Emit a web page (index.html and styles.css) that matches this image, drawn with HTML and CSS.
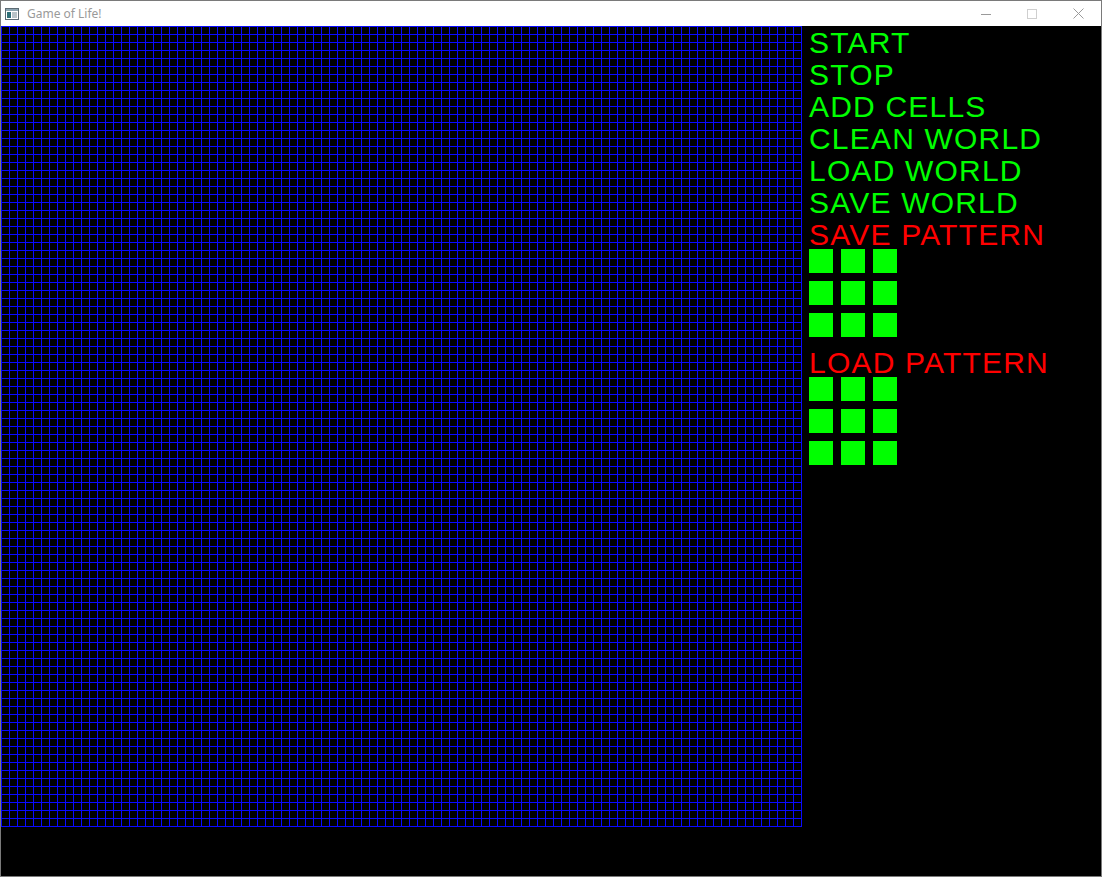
FILE: index.html
```html
<!DOCTYPE html>
<html>
<head>
<meta charset="utf-8">
<title>Game of Life!</title>
<link rel="stylesheet" href="styles.css">
</head>
<body>
<div class="window">
  <div class="titlebar">
    <div class="title-left">
      <svg class="app-icon" width="14" height="12" viewBox="0 0 14 12">
        <rect x="0.5" y="0.5" width="13" height="11" fill="#ffffff" stroke="#5d6b73"/>
        <rect x="1" y="1" width="12" height="2" fill="#8aa3b0"/>
        <rect x="2" y="4" width="4" height="6" fill="#2e6f77"/>
        <rect x="7" y="4" width="5" height="6" fill="#b9c3c8"/>
      </svg>
      <span class="title-text">Game of Life!</span>
    </div>
    <div class="controls">
      <div class="ctl">
        <svg width="10" height="10" viewBox="0 0 10 10"><line x1="0" y1="5.5" x2="10" y2="5.5" stroke="#9a9a9a" stroke-width="1"/></svg>
      </div>
      <div class="ctl">
        <svg width="10" height="10" viewBox="0 0 10 10"><rect x="0.5" y="0.5" width="9" height="9" fill="none" stroke="#cfcfcf" stroke-width="1"/></svg>
      </div>
      <div class="ctl">
        <svg width="11" height="11" viewBox="0 0 11 11"><path d="M0.5 0.5 L10.5 10.5 M10.5 0.5 L0.5 10.5" stroke="#9a9a9a" stroke-width="1"/></svg>
      </div>
    </div>
  </div>
  <div class="content">
    <div class="world"></div>
    <div class="panel">
      <div class="item green">START</div>
      <div class="item green">STOP</div>
      <div class="item green">ADD CELLS</div>
      <div class="item green">CLEAN WORLD</div>
      <div class="item green">LOAD WORLD</div>
      <div class="item green">SAVE WORLD</div>
      <div class="item red">SAVE PATTERN</div>
      <div class="pattern first">
        <span></span><span></span><span></span>
        <span></span><span></span><span></span>
        <span></span><span></span><span></span>
      </div>
      <div class="item red big">LOAD PATTERN</div>
      <div class="pattern">
        <span></span><span></span><span></span>
        <span></span><span></span><span></span>
        <span></span><span></span><span></span>
      </div>
    </div>
  </div>
</div>
</body>
</html>
```

FILE: styles.css
```css
html, body {
  margin: 0;
  padding: 0;
  background: #ffffff;
}

.window {
  width: 1102px;
  height: 877px;
  box-sizing: border-box;
  border: 1px solid #7a7a7a;
  display: flex;
  flex-direction: column;
  overflow: hidden;
}

.titlebar {
  height: 25px;
  background: #ffffff;
  display: flex;
  align-items: center;
  justify-content: space-between;
  flex: none;
}

.title-left {
  display: flex;
  align-items: center;
  padding-left: 4px;
  gap: 8px;
}

.app-icon {
  display: block;
}

.title-text {
  font-family: "Noto Sans", "Open Sans", sans-serif;
  font-size: 12px;
  color: #9a9a9a;
}

.controls {
  display: flex;
  height: 100%;
}

.ctl {
  width: 46px;
  height: 100%;
  display: flex;
  align-items: center;
  justify-content: center;
}

.content {
  flex: 1;
  background: #000000;
  display: flex;
  align-items: flex-start;
}

.world {
  width: 801px;
  height: 801px;
  flex: none;
  background-color: #000000;
  background-image:
    linear-gradient(to right, #0a0aff 1px, transparent 1px),
    linear-gradient(to bottom, #0a0aff 1px, transparent 1px);
  background-size: 8px 8px;
}

.panel {
  margin-left: 7px;
  padding-top: 1px;
  display: flex;
  flex-direction: column;
}

.item {
  font-family: "Liberation Sans", Arial, sans-serif;
  font-size: 30px;
  line-height: 32px;
  height: 32px;
  letter-spacing: 1.2px;
  white-space: nowrap;
}

.item.big {
  margin-top: 10px;
  height: 30px;
}

.green {
  color: #00ff00;
}

.red {
  color: #ff0000;
}

.pattern {
  display: grid;
  grid-template-columns: repeat(3, 24px);
  grid-auto-rows: 24px;
  gap: 8px;
}

.pattern.first {
  margin-top: -2px;
}

.pattern span {
  background: #00ff00;
}
```
